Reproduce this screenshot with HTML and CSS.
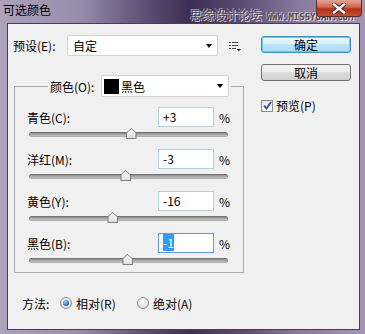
FILE: index.html
```html
<!DOCTYPE html>
<html lang="zh-CN">
<head>
  <meta charset="UTF-8" />
  <title>可选颜色</title>
  <link rel="stylesheet" href="styles.css">
</head>
<body>
  <div class="window">
    <div class="titlebar">
      <span class="title">可选颜色</span>
      <span class="mark">思缘设计论坛 <b>WWW.MISSYUAN.COM</b></span>
      <span class="close">
        <svg width="14" height="11" viewBox="0 0 14 11"><path d="M2 1.5 L12 9.5 M12 1.5 L2 9.5" stroke="#3a1a14" stroke-width="4.2" stroke-linecap="square"/><path d="M2 1.5 L12 9.5 M12 1.5 L2 9.5" stroke="#fff" stroke-width="2.4" stroke-linecap="square"/></svg>
      </span>
    </div>

    <div class="client">
      <div class="main">
        <div class="preset">
          <span class="preset-label">预设(E):</span>
          <div class="select wide">自定<i class="arrow"></i></div>
          <svg class="menu-icon" width="12" height="10" viewBox="0 0 12 10">
            <path d="M0 0.5h2M3 0.5h6M0 3.5h2M3 3.5h6M0 6.5h2M3 6.5h4" stroke="#444" stroke-width="1"/>
            <path d="M7.5 7h4.5l-2.25 2.5z" fill="#333"/>
          </svg>
        </div>

        <fieldset class="group">
          <legend>
            <span class="legend-label">颜色(O):</span>
            <div class="select color"><i class="swatch"></i>黑色<i class="arrow"></i></div>
          </legend>

          <div class="adj">
            <div class="adj-head"><span class="adj-name">青色(C):</span><span class="field">+3</span><span class="pct">%</span></div>
            <div class="slider"><span class="thumb" style="left:51.5%"></span></div>
          </div>
          <div class="adj">
            <div class="adj-head"><span class="adj-name">洋红(M):</span><span class="field">-3</span><span class="pct">%</span></div>
            <div class="slider"><span class="thumb" style="left:48.5%"></span></div>
          </div>
          <div class="adj">
            <div class="adj-head"><span class="adj-name">黄色(Y):</span><span class="field">-16</span><span class="pct">%</span></div>
            <div class="slider"><span class="thumb" style="left:42%"></span></div>
          </div>
          <div class="adj">
            <div class="adj-head"><span class="adj-name">黑色(B):</span><span class="field focus"><span class="sel">-1</span></span><span class="pct">%</span></div>
            <div class="slider"><span class="thumb" style="left:49.5%"></span></div>
          </div>
        </fieldset>

        <div class="method">
          <span class="method-label">方法:</span>
          <span class="radio on"></span><span class="radio-text">相对(R)</span>
          <span class="radio"></span><span class="radio-text">绝对(A)</span>
        </div>
      </div>

      <div class="side">
        <div class="btn default">确定</div>
        <div class="btn">取消</div>
        <div class="check">
          <span class="box">
            <svg width="9" height="9" viewBox="0 0 9 9"><path d="M1 4.5 L3.5 7.5 L8 1" fill="none" stroke="#2d4fa0" stroke-width="1.8"/></svg>
          </span>
          预览(P)
        </div>
      </div>
    </div>
  </div>
</body>
</html>
```

FILE: styles.css
```css
:root {
  --face: #f0f0f0;
  --ui-font: "Noto Sans CJK SC", "DejaVu Sans", sans-serif;
}

body {
  margin: 0;
  font-family: var(--ui-font);
  font-size: 12px;
  color: #000;
}

.window {
  width: 365px;
  height: 334px;
  display: flex;
  flex-direction: column;
  background: linear-gradient(to right, #aca2bb 0%, #988cab 22%, #5e4d74 40%, #3e2e52 52%, #5c4a74 66%, #8b7a9e 82%, #a494b4 100%);
  overflow: hidden;
}

/* title bar */
.titlebar {
  position: relative;
  height: 23px;
  flex: none;
}
.title {
  position: absolute;
  left: 3px;
  top: 3px;
  font-size: 12px;
  line-height: 14px;
  color: #000;
}
.mark {
  position: absolute;
  left: 190px;
  top: 8px;
  font-size: 12px;
  line-height: 14px;
  color: #4e4e4e;
  text-shadow: 1px 1px 0 rgba(255, 255, 255, 0.8), -1px -1px 0 rgba(255, 255, 255, 0.5);
  white-space: nowrap;
}
.mark b {
  font-family: "DejaVu Sans Mono", monospace;
  font-size: 9px;
  margin-left: 2px;
}
.close {
  position: absolute;
  left: 316px;
  top: 0;
  width: 46px;
  height: 17px;
  border: 1px solid #5b2a2a;
  border-top: 0;
  border-radius: 0 0 4px 4px;
  background: linear-gradient(#e3a595 0%, #d0634d 45%, #b5301c 55%, #c44d32 100%);
  display: flex;
  justify-content: center;
  align-items: center;
  box-sizing: border-box;
}

/* client area */
.client {
  flex: 1;
  margin: 0 5px 4px 7px;
  background: var(--face);
  border: 1px solid #4a3b5e;
  display: flex;
  padding-top: 11px;
}
.main {
  width: 228px;
  padding-left: 5px;
}

.preset {
  display: flex;
  align-items: center;
  height: 21px;
}
.preset-label {
  width: 54px;
}
.select {
  position: relative;
  box-sizing: border-box;
  height: 21px;
  background: #fff;
  border: 1px solid #d3d3d3;
  border-radius: 2px;
  display: flex;
  align-items: center;
  padding-left: 5px;
}
.select.wide {
  width: 151px;
}
.arrow {
  position: absolute;
  right: 5px;
  top: 8px;
  border-left: 3.5px solid transparent;
  border-right: 3.5px solid transparent;
  border-top: 4px solid #000;
}
.menu-icon {
  margin-left: 11px;
  margin-top: 3px;
}

/* group box */
.group {
  margin: 19px 0 0 1px;
  width: 227px;
  box-sizing: border-box;
  border: 1px solid #a9a9a9;
  padding: 10px 12px 1px 12px;
}
.group legend {
  margin-left: 21px;
  padding: 0 2px;
  display: flex;
  align-items: center;
}
.legend-label {
  width: 51px;
}
.select.color {
  width: 128px;
  height: 22px;
  padding-left: 2px;
}
.swatch {
  width: 15px;
  height: 15px;
  background: #000;
  margin-right: 2px;
}

.adj + .adj {
  margin-top: 4px;
}
.adj-head {
  display: flex;
  align-items: center;
  height: 20px;
}
.adj-name {
  width: 131px;
}
.field {
  box-sizing: border-box;
  width: 56px;
  height: 20px;
  background: #fff;
  border: 1px solid #b9cde0;
  padding-left: 4px;
  line-height: 18px;
}
.field.focus {
  border-color: #5a9bd8;
}
.sel {
  background: #3399ff;
  color: #fff;
}
.pct {
  margin-left: 5px;
}

.slider {
  position: relative;
  height: 18px;
  margin-left: 2px;
  width: 199px;
}
.slider::before {
  content: "";
  position: absolute;
  left: 0;
  right: 0;
  top: 5px;
  height: 5px;
  border-radius: 3px;
  background: linear-gradient(#7c7c7c, #a8a8a8 50%, #d8d8d8);
  box-shadow: inset 0 0 0 1px rgba(0, 0, 0, 0.15);
}
.thumb {
  position: absolute;
  top: 1px;
  width: 11px;
  height: 11px;
  transform: translateX(-50%);
  background: #7d7d7d;
  clip-path: polygon(50% 0, 100% 45%, 100% 100%, 0 100%, 0 45%);
}
.thumb::after {
  content: "";
  position: absolute;
  inset: 1px;
  background: linear-gradient(#fafafa, #dedede);
  clip-path: polygon(50% 0, 100% 45%, 100% 100%, 0 100%, 0 45%);
}

/* method row */
.method {
  display: flex;
  align-items: center;
  height: 16px;
  margin: 22px 0 0 9px;
}
.method-label {
  width: 38px;
}
.radio {
  width: 12px;
  height: 12px;
  box-sizing: border-box;
  border-radius: 50%;
  border: 1px solid #8a8a8a;
  background: radial-gradient(circle at 40% 35%, #ffffff, #d8d8d8);
  position: relative;
}
.radio.on::after {
  content: "";
  position: absolute;
  left: 2px;
  top: 2px;
  width: 6px;
  height: 6px;
  border-radius: 50%;
  background: radial-gradient(circle at 40% 35%, #8fd6ff, #1a64b0 70%);
}
.radio-text {
  margin-left: 4px;
  width: 61px;
}

/* buttons */
.side {
  margin-left: 20px;
  width: 90px;
  padding-top: 1px;
}
.btn {
  box-sizing: border-box;
  height: 17px;
  border: 1px solid #707070;
  border-radius: 3px;
  background: linear-gradient(#f4f4f4 0%, #ebebeb 50%, #dddddd 50%, #cfcfcf 100%);
  text-align: center;
  line-height: 15px;
}
.btn.default {
  border-color: #3c8dc6;
  background: linear-gradient(#eaf7fd 0%, #d8f0fb 50%, #bde6fa 50%, #a8dcf5 100%);
  box-shadow: inset 0 0 0 1px #5fd2f6;
}
.btn + .btn {
  margin-top: 11px;
}
.check {
  display: flex;
  align-items: center;
  margin-top: 16px;
}
.box {
  box-sizing: border-box;
  width: 12px;
  height: 12px;
  border: 1px solid #8e8f8f;
  background: linear-gradient(#e8e8e8, #fdfdfd);
  margin-right: 3px;
  display: flex;
  justify-content: center;
  align-items: center;
}
```
